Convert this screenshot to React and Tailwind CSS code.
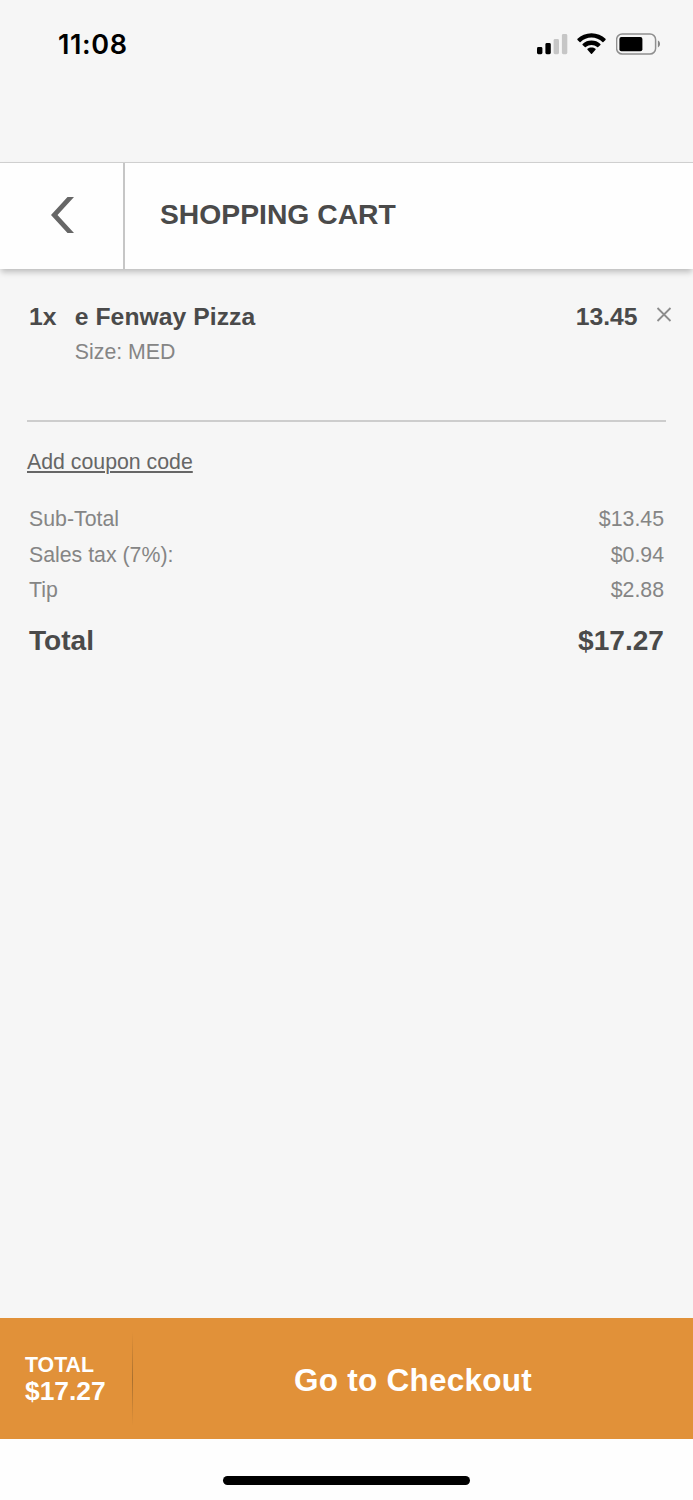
function StatusBar() {
  return (
    <div className="flex h-[162px] items-start justify-between pt-[29px] pr-[32px] pl-[57px]">
      <span className="pl-px font-['Inter',sans-serif] text-[27px] leading-[31px] font-semibold tracking-[0.6px] text-black">
        11:08
      </span>
      <div className="flex items-start pt-[3px]">
        <svg className="mr-[9px] h-[24px] w-[31px]" viewBox="0 0 31 24">
          <rect x="0" y="15" width="5.4" height="7.2" rx="1.4" fill="#000" />
          <rect x="8.4" y="11" width="5.4" height="11.2" rx="1.4" fill="#000" />
          <rect x="16.6" y="7" width="5.4" height="15.2" rx="1.4" fill="#c6c6c6" />
          <rect x="24.9" y="2" width="5.4" height="20.2" rx="1.4" fill="#c6c6c6" />
        </svg>
        <svg className="mr-[10px] h-[24px] w-[29px]" viewBox="0 0 29 24">
          <path d="M14.500 1.300C20 1.300 25 3.400 28.500 6.800c.3.300.3.800 0 1.100l-2.100 2.100c-.3.300-.7.300-1 0-2.900-2.800-6.800-4.400-10.900-4.400S6.500 7.200 3.600 10c-.3.300-.7.300-1 0L.5 7.900c-.3-.3-.3-.8 0-1.100C4 3.400 9 1.300 14.500 1.300Z" />
          <path d="M14.500 8.600c3.400 0 6.500 1.200 8.900 3.300.3.300.3.700 0 1L21.200 15.100c-.3.300-.7.300-1 0-1.600-1.400-3.600-2.200-5.700-2.200s-4.100.8-5.700 2.200c-.3.300-.7.300-1 0L5.600 12.900c-.3-.3-.3-.7 0-1 2.400-2.100 5.500-3.300 8.900-3.300Z" />
          <path d="M14.500 15.400c1.500 0 2.900.5 4 1.300.3.300.3.800 0 1.100l-3.500 3.900c-.3.300-.7.300-1 0l-3.500-3.900c-.3-.3-.3-.8 0-1.100 1.100-.8 2.500-1.300 4-1.300Z" />
        </svg>
        <svg className="h-[24px] w-[45px]" viewBox="0 0 45 24">
          <rect x="0.6" y="2" width="39" height="20" rx="5.6" fill="none" stroke="#8f8f8f" strokeWidth="1.5" />
          <rect x="3.4" y="5" width="23" height="14.2" rx="2" fill="#000" />
          <path d="M41.900 8.600c1.300.6 2.100 1.900 2.100 3.400s-.8 2.800-2.100 3.400Z" fill="#858585" />
        </svg>
      </div>
    </div>
  );
}

function Header() {
  return (
    <header className="flex h-[107px] border-t border-[#cfcfcf] bg-[#fefefe] shadow-[0_4px_6px_-1px_rgba(0,0,0,0.24)]">
      <button aria-label="Back" className="flex w-[125px] items-start border-r-2 border-[#c6c6c6] pt-[34px] pl-[50px]">
        <svg className="h-[36px] w-[25px]" viewBox="0 0 25 36">
          <path d="M17.500 0H24L7.500 18 24 36H17.500L1 18Z" fill="#666" />
        </svg>
      </button>
      <h1 className="pt-[35px] pl-[35px] text-[28.3px] leading-[32px] font-bold text-[#4a4a4a]">SHOPPING CART</h1>
    </header>
  );
}

function CartItem() {
  return (
    <section className="flex h-[151px] items-start pt-[33px] pl-[29px]">
      <span className="w-[45.8px] text-[24.7px] leading-[30px] font-bold text-[#4a4a4a]">1x</span>
      <div className="flex-1">
        <p className="text-[24.7px] leading-[30px] font-bold tracking-[0.05px] text-[#4a4a4a]">e Fenway Pizza</p>
        <p className="mt-[7px] text-[21.3px] leading-[26px] text-[#858585]">Size: MED</p>
      </div>
      <span className="text-[24.7px] leading-[30px] font-bold text-[#4a4a4a]">13.45</span>
      <button aria-label="Remove item" className="mt-[5px] mr-[21px] ml-[18.5px]">
        <svg className="h-[15px] w-[16px]" viewBox="0 0 16 15">
          <path d="M1.500 1 14.500 14M14.500 1 1.500 14" stroke="#8c8c8c" strokeWidth="1.8" fill="none" />
        </svg>
      </button>
    </section>
  );
}

const charges = [
  ["Sub-Total", "$13.45"],
  ["Sales tax (7%):", "$0.94"],
  ["Tip", "$2.88"],
];

function Summary() {
  return (
    <section className="mx-[27px] flex-1 border-t-2 border-[#cdcdcd] pt-[27px]">
      <a className="block text-[21.3px] leading-[26px] text-[#666] underline decoration-[1.5px] underline-offset-[2px]">
        Add coupon code
      </a>
      <dl className="mt-[27px] pr-[2px] pl-[2px]">
        {charges.map(([label, amount]) => (
          <div key={label} className="flex h-[35.5px] justify-between text-[21.3px] leading-[35.5px] text-[#858585]">
            <dt>{label}</dt>
            <dd>{amount}</dd>
          </div>
        ))}
        <div className="mt-[15px] flex justify-between text-[28.1px] leading-[34px] font-bold text-[#4a4a4a]">
          <dt>Total</dt>
          <dd>$17.27</dd>
        </div>
      </dl>
    </section>
  );
}

function CheckoutBar() {
  return (
    <div className="flex h-[121px] items-center bg-[#e19139] font-bold text-white">
      <div className="w-[132px] pl-[25px]">
        <p className="text-[21.3px] leading-[26px]">TOTAL</p>
        <p className="-mt-px pb-px text-[26.4px] leading-[28px]">$17.27</p>
      </div>
      <div className="h-[94px] w-px bg-linear-to-b from-[#e19139] via-[#a9702f] to-[#e19139]" />
      <button className="flex-1 pt-[3px] text-center text-[31.5px] leading-[40px] tracking-[0.25px]">Go to Checkout</button>
    </div>
  );
}

export default function App() {
  return (
    <main className="flex h-[1500px] w-[693px] flex-col overflow-hidden bg-[#f6f6f6] font-['Liberation_Sans',Arial,sans-serif]">
      <StatusBar />
      <Header />
      <CartItem />
      <Summary />
      <CheckoutBar />
      <div className="flex h-[61px] justify-center bg-[#fefefe] pt-[37px]">
        <div className="h-[9px] w-[247px] rounded-full bg-black" />
      </div>
    </main>
  );
}
